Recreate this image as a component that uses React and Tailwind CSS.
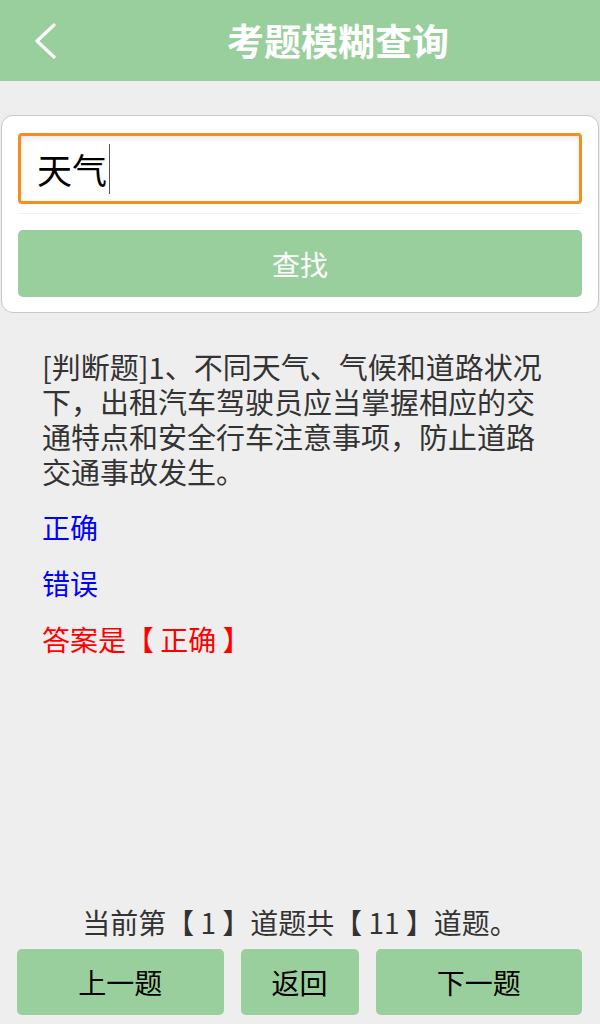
export default function App() {
  const font = { fontFamily: '"Noto Sans CJK SC", "Noto Sans", sans-serif' };
  return (
    <div className="min-h-[1024px] h-[1024px] bg-[#eeeeee] flex flex-col" style={font}>
      {/* header */}
      <div className="h-[81px] bg-[#99cf9c] flex items-center shrink-0">
        <div className="w-[76px] h-full flex items-center pl-[33px]">
          <svg width="24" height="36" viewBox="0 0 24 36" fill="none">
            <path d="M21 2 L4 18 L21 34" stroke="white" strokeWidth="3.2" strokeLinecap="round" strokeLinejoin="round" />
          </svg>
        </div>
        <div className="flex-1 text-center text-white font-bold text-[37px] leading-none">考题模糊查询</div>
      </div>

      {/* search card */}
      <div className="mt-[34px] mx-[1px] bg-white border border-[#c8c8c8] rounded-[12px] px-[16px] pt-[17px] pb-[15px]">
        <div className="h-[71px] border-[3px] border-[#f68d1c] rounded-[4px] shadow-[inset_0_3px_6px_rgba(0,0,0,0.08)] flex items-center pl-[16px]">
          <span className="text-[35px] text-black leading-none">天气</span>
          <span className="ml-[2px] w-[1px] h-[50px] bg-[#555]" />
        </div>
        <div className="mt-[9px] h-[1px] bg-[#f0f0f0]" />
        <button className="mt-[16px] w-full h-[67px] bg-[#99cf9c] rounded-[5px] text-white text-[28px] flex items-center justify-center">
          查找
        </button>
      </div>

      {/* question */}
      <div className="px-[42px] pt-[36px] flex flex-col gap-[21px]">
        <p className="text-[29px] leading-[35px] text-[#333333]">
          [判断题]1、不同天气、气候和道路状况下，出租汽车驾驶员应当掌握相应的交通特点和安全行车注意事项，防止道路交通事故发生。
        </p>
        <p className="text-[28px] leading-[35px] text-[#0000ff]">正确</p>
        <p className="text-[28px] leading-[35px] text-[#0000ff]">错误</p>
        <p className="text-[28px] leading-[35px] text-[#ff0000]">答案是【 正确 】</p>
      </div>

      {/* footer */}
      <div className="mt-auto pb-[9px]">
        <p className="text-center text-[28px] leading-[35px] text-[#333333]">当前第【 1 】道题共【 11 】道题。</p>
        <div className="mt-[9px] flex gap-[17px] pl-[17px] pr-[18px]">
          <button className="flex-1 h-[66px] bg-[#99cf9c] rounded-[5px] text-black text-[28px]">上一题</button>
          <button className="w-[118px] h-[66px] bg-[#99cf9c] rounded-[5px] text-black text-[28px]">返回</button>
          <button className="flex-1 h-[66px] bg-[#99cf9c] rounded-[5px] text-black text-[28px]">下一题</button>
        </div>
      </div>
    </div>
  );
}
